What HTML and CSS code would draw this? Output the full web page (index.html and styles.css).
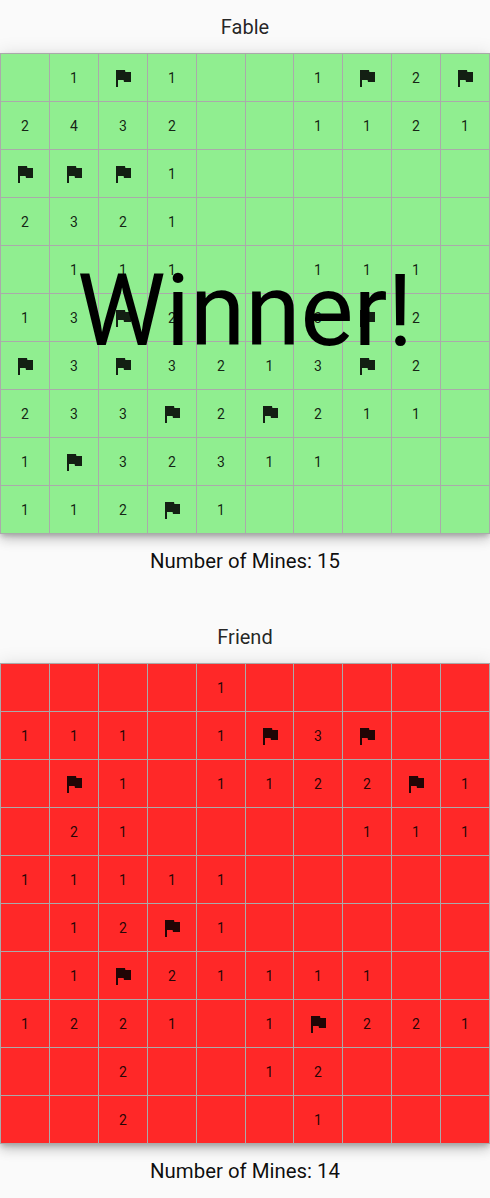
FILE: index.html
```html
<!DOCTYPE html>
<html lang="en">
<head>
    <title>Minesweeper</title>
    <meta charset="utf-8">
    <link rel="stylesheet" href="styles.css">
</head>
<body>

<svg class="defs" width="0" height="0">
    <symbol id="flag" viewBox="0 0 24 24"><path d="M14.4 6L14 4H5v17h2v-7h5.6l.4 2h7V6z"/></symbol>
</svg>

<section class="player">
    <h2 class="name">Fable</h2>
    <div class="board won">
        <div class="cell"></div><div class="cell">1</div><div class="cell"><svg class="flag"><use href="#flag"/></svg></div><div class="cell">1</div><div class="cell"></div><div class="cell"></div><div class="cell">1</div><div class="cell"><svg class="flag"><use href="#flag"/></svg></div><div class="cell">2</div><div class="cell"><svg class="flag"><use href="#flag"/></svg></div>
        <div class="cell">2</div><div class="cell">4</div><div class="cell">3</div><div class="cell">2</div><div class="cell"></div><div class="cell"></div><div class="cell">1</div><div class="cell">1</div><div class="cell">2</div><div class="cell">1</div>
        <div class="cell"><svg class="flag"><use href="#flag"/></svg></div><div class="cell"><svg class="flag"><use href="#flag"/></svg></div><div class="cell"><svg class="flag"><use href="#flag"/></svg></div><div class="cell">1</div><div class="cell"></div><div class="cell"></div><div class="cell"></div><div class="cell"></div><div class="cell"></div><div class="cell"></div>
        <div class="cell">2</div><div class="cell">3</div><div class="cell">2</div><div class="cell">1</div><div class="cell"></div><div class="cell"></div><div class="cell"></div><div class="cell"></div><div class="cell"></div><div class="cell"></div>
        <div class="cell"></div><div class="cell">1</div><div class="cell">1</div><div class="cell">1</div><div class="cell"></div><div class="cell"></div><div class="cell">1</div><div class="cell">1</div><div class="cell">1</div><div class="cell"></div>
        <div class="cell">1</div><div class="cell">3</div><div class="cell"><svg class="flag"><use href="#flag"/></svg></div><div class="cell">2</div><div class="cell"></div><div class="cell"></div><div class="cell">3</div><div class="cell"><svg class="flag"><use href="#flag"/></svg></div><div class="cell">2</div><div class="cell"></div>
        <div class="cell"><svg class="flag"><use href="#flag"/></svg></div><div class="cell">3</div><div class="cell"><svg class="flag"><use href="#flag"/></svg></div><div class="cell">3</div><div class="cell">2</div><div class="cell">1</div><div class="cell">3</div><div class="cell"><svg class="flag"><use href="#flag"/></svg></div><div class="cell">2</div><div class="cell"></div>
        <div class="cell">2</div><div class="cell">3</div><div class="cell">3</div><div class="cell"><svg class="flag"><use href="#flag"/></svg></div><div class="cell">2</div><div class="cell"><svg class="flag"><use href="#flag"/></svg></div><div class="cell">2</div><div class="cell">1</div><div class="cell">1</div><div class="cell"></div>
        <div class="cell">1</div><div class="cell"><svg class="flag"><use href="#flag"/></svg></div><div class="cell">3</div><div class="cell">2</div><div class="cell">3</div><div class="cell">1</div><div class="cell">1</div><div class="cell"></div><div class="cell"></div><div class="cell"></div>
        <div class="cell">1</div><div class="cell">1</div><div class="cell">2</div><div class="cell"><svg class="flag"><use href="#flag"/></svg></div><div class="cell">1</div><div class="cell"></div><div class="cell"></div><div class="cell"></div><div class="cell"></div><div class="cell"></div>
        <div class="banner">Winner!</div>
    </div>
    <p class="mines">Number of Mines: 15</p>
</section>

<section class="player">
    <h2 class="name">Friend</h2>
    <div class="board lost">
        <div class="cell"></div><div class="cell"></div><div class="cell"></div><div class="cell"></div><div class="cell">1</div><div class="cell"></div><div class="cell"></div><div class="cell"></div><div class="cell"></div><div class="cell"></div>
        <div class="cell">1</div><div class="cell">1</div><div class="cell">1</div><div class="cell"></div><div class="cell">1</div><div class="cell"><svg class="flag"><use href="#flag"/></svg></div><div class="cell">3</div><div class="cell"><svg class="flag"><use href="#flag"/></svg></div><div class="cell"></div><div class="cell"></div>
        <div class="cell"></div><div class="cell"><svg class="flag"><use href="#flag"/></svg></div><div class="cell">1</div><div class="cell"></div><div class="cell">1</div><div class="cell">1</div><div class="cell">2</div><div class="cell">2</div><div class="cell"><svg class="flag"><use href="#flag"/></svg></div><div class="cell">1</div>
        <div class="cell"></div><div class="cell">2</div><div class="cell">1</div><div class="cell"></div><div class="cell"></div><div class="cell"></div><div class="cell"></div><div class="cell">1</div><div class="cell">1</div><div class="cell">1</div>
        <div class="cell">1</div><div class="cell">1</div><div class="cell">1</div><div class="cell">1</div><div class="cell">1</div><div class="cell"></div><div class="cell"></div><div class="cell"></div><div class="cell"></div><div class="cell"></div>
        <div class="cell"></div><div class="cell">1</div><div class="cell">2</div><div class="cell"><svg class="flag"><use href="#flag"/></svg></div><div class="cell">1</div><div class="cell"></div><div class="cell"></div><div class="cell"></div><div class="cell"></div><div class="cell"></div>
        <div class="cell"></div><div class="cell">1</div><div class="cell"><svg class="flag"><use href="#flag"/></svg></div><div class="cell">2</div><div class="cell">1</div><div class="cell">1</div><div class="cell">1</div><div class="cell">1</div><div class="cell"></div><div class="cell"></div>
        <div class="cell">1</div><div class="cell">2</div><div class="cell">2</div><div class="cell">1</div><div class="cell"></div><div class="cell">1</div><div class="cell"><svg class="flag"><use href="#flag"/></svg></div><div class="cell">2</div><div class="cell">2</div><div class="cell">1</div>
        <div class="cell"></div><div class="cell"></div><div class="cell">2</div><div class="cell"></div><div class="cell"></div><div class="cell">1</div><div class="cell">2</div><div class="cell"></div><div class="cell"></div><div class="cell"></div>
        <div class="cell"></div><div class="cell"></div><div class="cell">2</div><div class="cell"></div><div class="cell"></div><div class="cell"></div><div class="cell">1</div><div class="cell"></div><div class="cell"></div><div class="cell"></div>
    </div>
    <p class="mines">Number of Mines: 14</p>
</section>

</body>
</html>
```
FILE: styles.css
```css
* {
    margin: 0;
    padding: 0;
    box-sizing: border-box;
}

html {
    overflow: hidden;
}

body {
    width: 490px;
    background: #fafafa;
    color: rgba(0, 0, 0, 0.87);
    font-family: Roboto, sans-serif;
}

.defs {
    position: absolute;
}

.player + .player {
    margin-top: 22px;
}

.name {
    height: 53px;
    display: flex;
    align-items: center;
    justify-content: center;
    font-size: 20px;
    font-weight: 400;
}

.board {
    position: relative;
    display: grid;
    grid-template-columns: repeat(5, 49px) 48px repeat(3, 49px) 50px;
    grid-auto-rows: 48px;
    height: 481px;
    border-bottom: 1px solid #aaa;
    box-shadow: 0 3px 5px -1px rgba(0, 0, 0, 0.2), 0 6px 10px rgba(0, 0, 0, 0.14), 0 1px 18px rgba(0, 0, 0, 0.12);
}

.won {
    background: #90ee90;
}

.lost {
    background: #ff2828;
}

.cell {
    display: flex;
    align-items: center;
    justify-content: center;
    border-top: 1px solid #aaa;
    border-left: 1px solid #aaa;
    font-size: 14px;
}

.cell:nth-child(10n) {
    border-right: 1px solid #aaa;
}

.flag {
    width: 24px;
    height: 24px;
    fill: rgba(0, 0, 0, 0.87);
}

.banner {
    position: absolute;
    inset: 0;
    display: flex;
    align-items: center;
    justify-content: center;
    padding-top: 35px;
    font-size: 100px;
    color: #000;
}

.mines {
    height: 54px;
    display: flex;
    align-items: center;
    justify-content: center;
    font-size: 20.4px;
    color: rgba(0, 0, 0, 0.95);
}
```
